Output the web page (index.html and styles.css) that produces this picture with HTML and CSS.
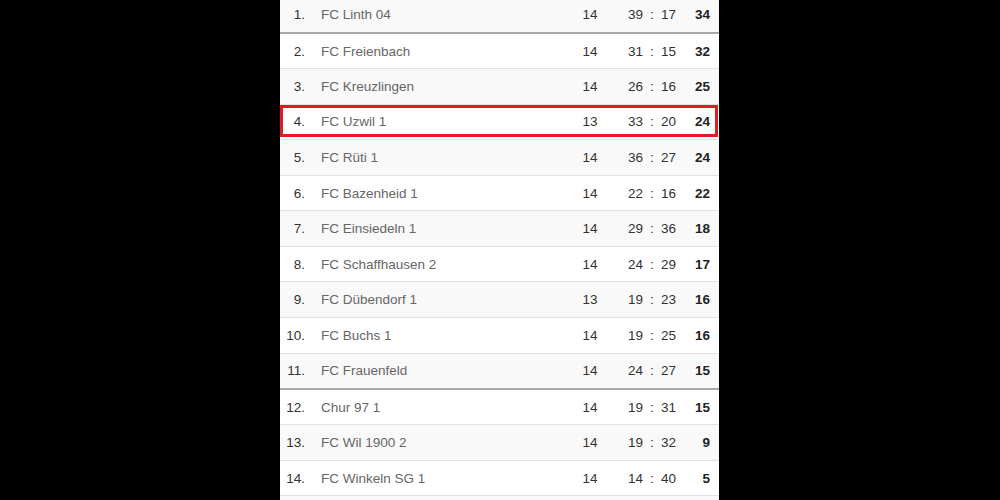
FILE: index.html
```html
<!DOCTYPE html>
<html>
<head>
<meta charset="utf-8">
<link rel="stylesheet" href="styles.css">
</head>
<body>
<div class="table">
  <div class="row striped"><span class="rank">1.</span><span class="team">FC Linth 04</span><span class="games">14</span><span class="gf">39</span><span class="colon">:</span><span class="ga">17</span><span class="pts">34</span></div>
  <div class="row sep"><span class="rank">2.</span><span class="team">FC Freienbach</span><span class="games">14</span><span class="gf">31</span><span class="colon">:</span><span class="ga">15</span><span class="pts">32</span></div>
  <div class="row striped"><span class="rank">3.</span><span class="team">FC Kreuzlingen</span><span class="games">14</span><span class="gf">26</span><span class="colon">:</span><span class="ga">16</span><span class="pts">25</span></div>
  <div class="row highlight"><span class="rank">4.</span><span class="team">FC Uzwil 1</span><span class="games">13</span><span class="gf">33</span><span class="colon">:</span><span class="ga">20</span><span class="pts">24</span></div>
  <div class="row striped"><span class="rank">5.</span><span class="team">FC Rüti 1</span><span class="games">14</span><span class="gf">36</span><span class="colon">:</span><span class="ga">27</span><span class="pts">24</span></div>
  <div class="row"><span class="rank">6.</span><span class="team">FC Bazenheid 1</span><span class="games">14</span><span class="gf">22</span><span class="colon">:</span><span class="ga">16</span><span class="pts">22</span></div>
  <div class="row striped"><span class="rank">7.</span><span class="team">FC Einsiedeln 1</span><span class="games">14</span><span class="gf">29</span><span class="colon">:</span><span class="ga">36</span><span class="pts">18</span></div>
  <div class="row"><span class="rank">8.</span><span class="team">FC Schaffhausen 2</span><span class="games">14</span><span class="gf">24</span><span class="colon">:</span><span class="ga">29</span><span class="pts">17</span></div>
  <div class="row striped"><span class="rank">9.</span><span class="team">FC Dübendorf 1</span><span class="games">13</span><span class="gf">19</span><span class="colon">:</span><span class="ga">23</span><span class="pts">16</span></div>
  <div class="row"><span class="rank">10.</span><span class="team">FC Buchs 1</span><span class="games">14</span><span class="gf">19</span><span class="colon">:</span><span class="ga">25</span><span class="pts">16</span></div>
  <div class="row striped"><span class="rank">11.</span><span class="team">FC Frauenfeld</span><span class="games">14</span><span class="gf">24</span><span class="colon">:</span><span class="ga">27</span><span class="pts">15</span></div>
  <div class="row sep"><span class="rank">12.</span><span class="team">Chur 97 1</span><span class="games">14</span><span class="gf">19</span><span class="colon">:</span><span class="ga">31</span><span class="pts">15</span></div>
  <div class="row striped"><span class="rank">13.</span><span class="team">FC Wil 1900 2</span><span class="games">14</span><span class="gf">19</span><span class="colon">:</span><span class="ga">32</span><span class="pts">9</span></div>
  <div class="row"><span class="rank">14.</span><span class="team">FC Winkeln SG 1</span><span class="games">14</span><span class="gf">14</span><span class="colon">:</span><span class="ga">40</span><span class="pts">5</span></div>
  <div class="row striped"><span class="rank"></span><span class="team"></span><span class="games"></span><span class="gf"></span><span class="colon"></span><span class="ga"></span><span class="pts"></span></div>
</div>
</body>
</html>
```
FILE: styles.css
```css
html, body {
  margin: 0;
  padding: 0;
  background: #000;
  overflow: hidden;
  height: 500px;
}

.table {
  width: 439px;
  margin-left: 280px;
  margin-top: -3.6px;
  background: #fff;
  font-family: "Liberation Sans", Arial, sans-serif;
  font-size: 13.5px;
  color: #333;
}

.row {
  position: relative;
  display: grid;
  grid-template-columns: 33px 262px 30px 41px 12px 28px 33px;
  align-items: center;
  height: 35.57px;
  box-sizing: border-box;
  border-top: 1px solid #e2e2e2;
  background: #fff;
}

.row:first-child {
  border-top: none;
  height: 35.57px;
}

.row.striped {
  background: #f9f9f9;
}

.row.sep {
  border-top: 2px solid #a8a8a8;
  height: 36.1px;
}

.row.highlight::after {
  content: "";
  position: absolute;
  left: 0;
  right: 1px;
  top: 0;
  bottom: 2px;
  border: 3px solid #e31b23;
  border-left-width: 3.5px;
  pointer-events: none;
}

.rank {
  text-align: right;
  padding-right: 8px;
}

.team {
  padding-left: 8px;
  color: #666;
}

.games {
  text-align: center;
}

.gf {
  text-align: right;
  padding-right: 3px;
}

.colon {
  text-align: center;
}

.ga {
  text-align: left;
  padding-left: 3px;
}

.pts {
  text-align: right;
  padding-right: 9px;
  font-weight: bold;
  color: #222;
}
```
